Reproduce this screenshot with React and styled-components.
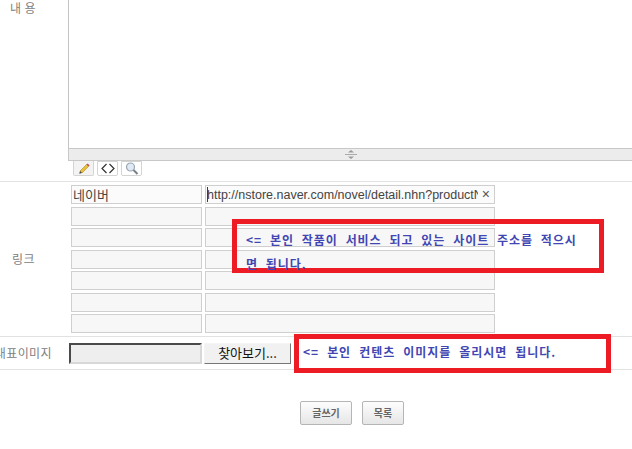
import React from 'react';
import styled, { createGlobalStyle } from 'styled-components';

const KR = `'Noto Sans CJK KR', 'Noto Sans', sans-serif`;
const LINK_ROWS = 7;

const Global = createGlobalStyle`
  html, body { margin: 0; padding: 0; background: #fff; overflow: hidden; }
  body { font-family: ${KR}; }
`;

const Page = styled.div`
  position : relative;
  width    : 632px;
  height   : 449px;
  overflow : hidden;
`;

const Row = styled.div`
  display       : flex;
  height        : ${p => p.$height}px;
  border-bottom : 1px solid #e2e2e2;
  box-sizing    : border-box;
`;

const Label = styled.div`
  flex        : 0 0 ${p => p.$width}px;
  min-width   : 0;
  display     : flex;
  align-items : ${p => p.$top ? 'flex-start' : 'center'};
  justify-content : flex-end;
  font-size   : 12px;
  line-height : 16px;
  letter-spacing : .4px;
  color       : #808080;
  white-space : nowrap;
  padding-right : ${p => p.$right}px;
  box-sizing  : border-box;
`;

const EditorCol = styled.div`
  flex           : 1;
  display        : flex;
  flex-direction : column;
`;

const TextArea = styled.div`
  height      : 148px;
  border-left : 1px solid #c4c4c4;
  box-sizing  : border-box;
  background  : #fff;
`;

const Grabber = styled.div`
  height          : 13px;
  display         : flex;
  align-items     : center;
  justify-content : center;
  background      : #ececec;
  border          : solid #c8c8c8;
  border-width    : 1px 0 1px 1px;
  box-sizing      : border-box;
`;

const Tabs = styled.div`
  display     : flex;
  gap         : 3px;
  padding-left: 5px;
`;

const Tab = styled.div`
  width           : 21px;
  height          : 15px;
  display         : flex;
  align-items     : center;
  justify-content : center;
  border          : 1px solid #d4d4d4;
  border-top      : ${p => p.$active ? 'none' : '1px solid #d4d4d4'};
  border-radius   : 0 0 2px 2px;
  background      : ${p => p.$active ? '#f3f3f3' : '#fff'};
  box-sizing      : border-box;
`;

const LinkGrid = styled.div`
  display               : grid;
  grid-template-columns : 131px 290px;
  grid-auto-rows        : 19px;
  align-content         : start;
  column-gap            : 3px;
  row-gap               : 2.5px;
  padding               : 3px 0 0 3px;
`;

const FieldBox = styled.div`
  position : relative;
  height   : 19px;
`;

const Field = styled.input`
  display     : block;
  width       : 100%;
  height      : 100%;
  box-sizing  : border-box;
  border      : 1px solid #cfcfcf;
  background  : ${p => p.$filled ? '#fbfbfb' : '#f7f7f7'};
  outline     : none;
  padding     : 0 ${p => p.$pad}px 0 1px;
  font-family : ${p => p.$url ? `'Liberation Sans', sans-serif` : KR};
  font-size   : ${p => p.$url ? 12.5 : 13}px;
  color       : #444;
`;

const Caret = styled.span`
  position   : absolute;
  left       : 2px;
  top        : 2px;
  width      : 1px;
  height     : 15px;
  background : #24406e;
`;

const Clear = styled.span`
  position  : absolute;
  right     : 5px;
  top       : 1px;
  font-family: 'Liberation Sans', sans-serif;
  font-size : 14px;
  line-height : 16px;
  color     : #555;
`;

const FileRow = styled.div`
  display     : flex;
  align-items : center;
  height      : 100%;
  padding-left: 1px;
`;

const FilePath = styled.div`
  width      : 133px;
  height     : 21px;
  box-sizing : border-box;
  border     : 2px solid;
  border-color: #4a4a4a #d8d8d8 #d8d8d8 #4a4a4a;
  background : #eeeeee;
`;

const Browse = styled.div`
  width       : 87px;
  height      : 21px;
  box-sizing  : border-box;
  margin-left : 2px;
  border      : 1px solid;
  border-color: #f4f4f4 #777 #777 #f4f4f4;
  background  : #f1f1f1;
  font-size   : 13px;
  line-height : 18px;
  text-align  : center;
  color       : #111;
`;

const Actions = styled.div`
  display         : flex;
  gap             : 10px;
  padding         : 31px 0 0 300px;
`;

const Button = styled.div`
  width        : ${p => p.$width}px;
  height       : 24px;
  box-sizing   : border-box;
  border       : 1px solid #b5b5b5;
  border-radius: 2px;
  background   : linear-gradient(#fdfdfd, #e6e6e6);
  font-size    : 10px;
  font-weight  : 700;
  line-height  : 21px;
  text-align   : center;
  color        : #666;
`;

const Callout = styled.div`
  position    : absolute;
  left        : ${p => p.$left}px;
  top         : ${p => p.$top}px;
  width       : ${p => p.$width}px;
  height      : ${p => p.$height}px;
  box-sizing  : border-box;
  border      : 5px solid #ed1c24;
  padding     : ${p => p.$pad};
  font-size   : 12px;
  font-weight : 700;
  line-height : 24px;
  letter-spacing : .95px;
  word-spacing : ${p => p.$words}px;
  color       : #4146b2;
`;

const Pencil = () => (
  <svg width="14" height="13" viewBox="0 0 14 13">
    <path d="M3 9 L9.5 2.5 L11.5 4.5 L5 11 Z" fill="#e8c23c" stroke="#b08a20" strokeWidth=".6" />
    <path d="M9.5 2.5 L10.6 1.4 L12.6 3.4 L11.5 4.5 Z" fill="#c0505f" />
    <path d="M3 9 L2.2 11.8 L5 11 Z" fill="#444" />
  </svg>
);

const CodeIcon = () => (
  <svg width="14" height="11" viewBox="0 0 14 11">
    <path d="M5.5 1 L1 5.5 L5.5 10 M8.5 1 L13 5.5 L8.5 10" fill="none" stroke="#333" strokeWidth="1.2" />
  </svg>
);

const Lens = () => (
  <svg width="14" height="13" viewBox="0 0 14 13">
    <circle cx="5.5" cy="5" r="4" fill="#dfeaf5" stroke="#9aa7b3" strokeWidth="1.2" />
    <path d="M8.5 8 L12.5 12" stroke="#77818a" strokeWidth="2" />
  </svg>
);

const GrabIcon = () => (
  <svg width="14" height="9" viewBox="0 0 14 9">
    <path d="M7 0 L10 2.5 L4 2.5 Z M7 9 L10 6.5 L4 6.5 Z" fill="#999" />
    <path d="M1 4.5 H13" stroke="#aaa" strokeWidth="1" />
  </svg>
);

export default function App() {
  return (
    <Page>
      <Global />
      <Row $height={182}>
        <Label $width={68} $right={32} $top>내 용</Label>
        <EditorCol>
          <TextArea />
          <Grabber><GrabIcon /></Grabber>
          <Tabs>
            <Tab $active><Pencil /></Tab>
            <Tab><CodeIcon /></Tab>
            <Tab><Lens /></Tab>
          </Tabs>
        </EditorCol>
      </Row>
      <Row $height={155}>
        <Label $width={68} $right={33}>링크</Label>
        <LinkGrid>
          <FieldBox><Field readOnly $filled $pad={1} value="네이버" /></FieldBox>
          <FieldBox>
            <Field readOnly $filled $url $pad={16} value="http://nstore.naver.com/novel/detail.nhn?productNo=1234" />
            <Caret />
            <Clear>×</Clear>
          </FieldBox>
          {Array.from({ length: (LINK_ROWS - 1) * 2 }, (_, i) => (
            <FieldBox key={i}><Field readOnly $pad={1} value="" /></FieldBox>
          ))}
        </LinkGrid>
      </Row>
      <Row $height={33}>
        <Label $width={68} $right={16}>대표이미지</Label>
        <FileRow>
          <FilePath />
          <Browse>찾아보기...</Browse>
        </FileRow>
      </Row>
      <Actions>
        <Button $width={52}>글쓰기</Button>
        <Button $width={42}>목록</Button>
      </Actions>
      <Callout $left={232} $top={219} $width={372} $height={54} $pad="4px 20px 0 9px" $words={4.2}>
        {'<= 본인 작품이 서비스 되고 있는 사이트 주소를 적으시면 됩니다.'}
      </Callout>
      <Callout $left={294} $top={334} $width={317} $height={39} $pad="1px 0 0 4px" $words={4.4}>
        {'<= 본인 컨텐츠 이미지를 올리시면 됩니다.'}
      </Callout>
    </Page>
  );
}
